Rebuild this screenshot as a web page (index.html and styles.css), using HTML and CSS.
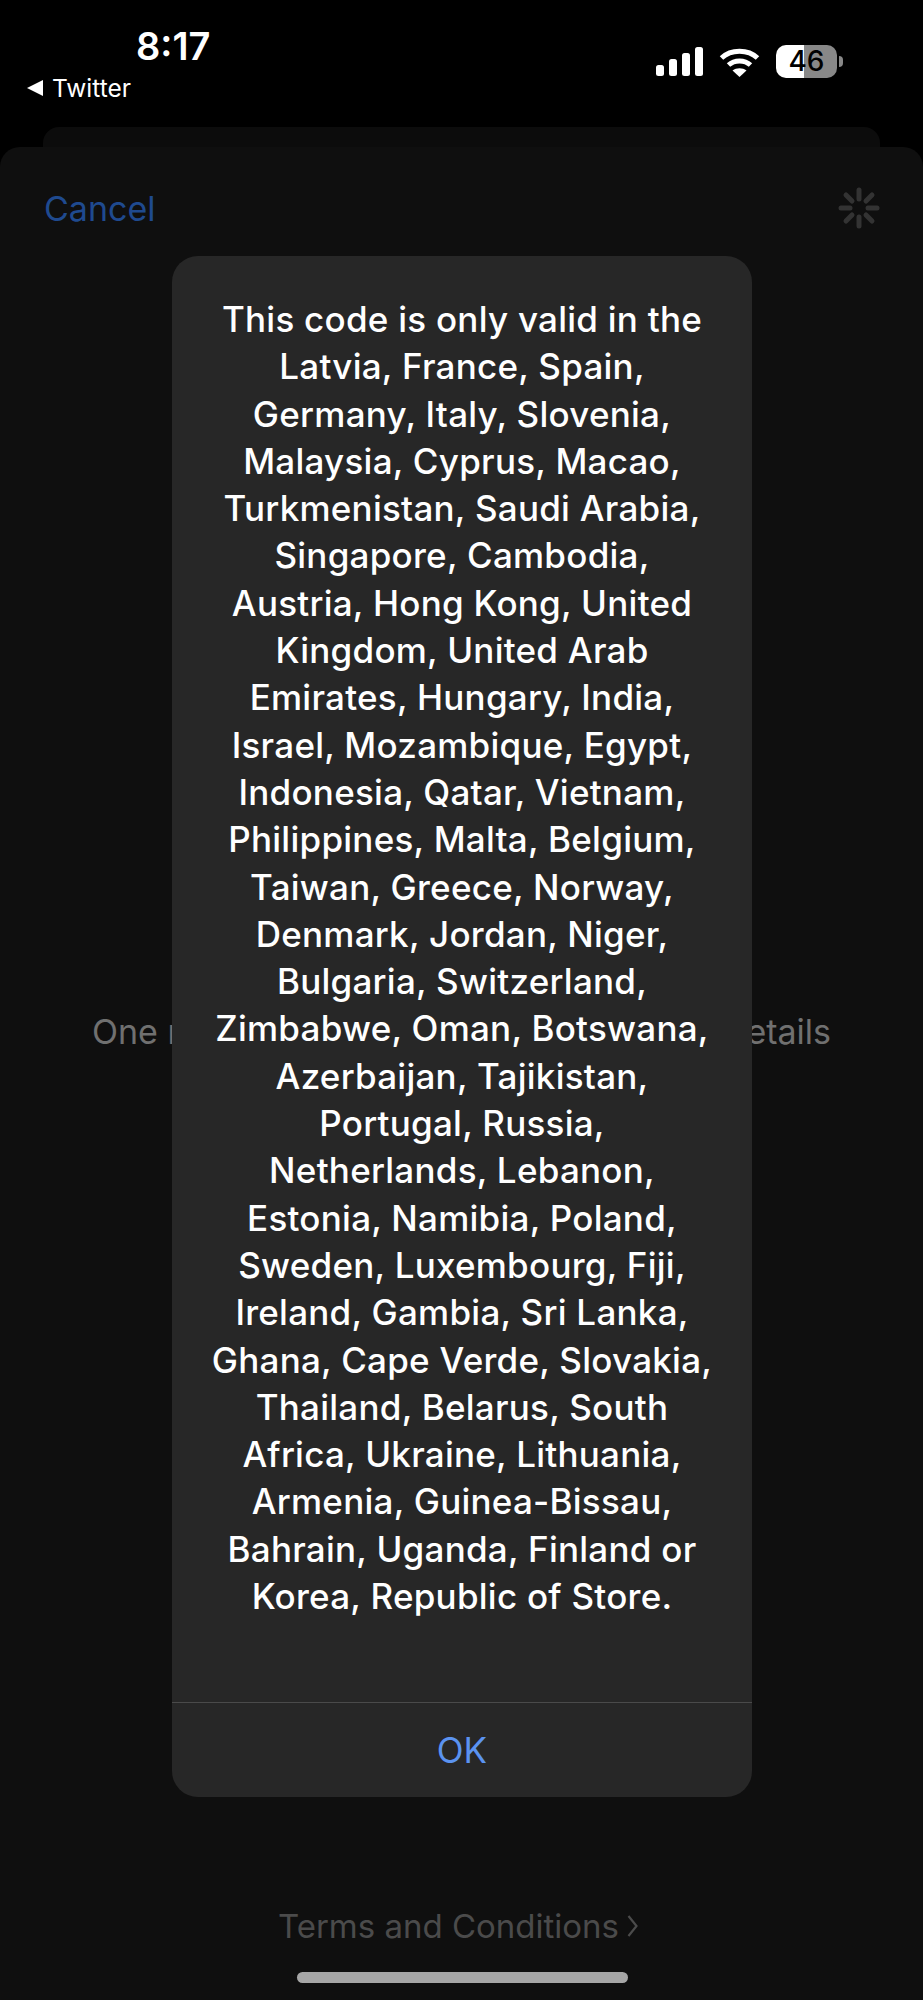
FILE: index.html
```html
<!DOCTYPE html>
<html lang="en">
<head>
  <meta charset="UTF-8">
  <meta name="viewport" content="width=device-width, initial-scale=1.0">
  <link rel="stylesheet" href="styles.css">
  <title>Redeem Code</title>
</head>
<body>
  <div class="status-bar">
    <div class="status-left">
      <div class="status-time">8:17</div>
      <div class="status-back">
        <svg class="back-arrow" width="16" height="16" viewBox="0 0 16 16"><path d="M0 8 L16 0 V16 Z" fill="#fff" /></svg>
        <span>Twitter</span>
      </div>
    </div>
    <div class="status-right">
      <svg width="47" height="29" viewBox="0 0 47 29" fill="#fff">
        <rect x="0" y="18" width="8" height="11" rx="2.5" />
        <rect x="13" y="12" width="8" height="17" rx="2.5" />
        <rect x="26" y="6" width="8" height="23" rx="2.5" />
        <rect x="39" y="0" width="8" height="29" rx="2.5" />
      </svg>
      <svg width="41" height="30" viewBox="0 0 41 30" fill="none" stroke="#fff" stroke-width="5">
        <path d="M2.5 11 C12 2 29 2 38.500 11" />
        <path d="M9.500 18 C15.500 12.500 25.500 12.500 31.500 18" />
        <path d="M20.500 30 L13.500 23.500 C17.500 20.500 23.500 20.500 27.500 23.500 Z" fill="#fff" stroke="none" />
      </svg>
      <div class="battery">
        <div class="battery-body">46</div>
        <div class="battery-nub"></div>
      </div>
    </div>
  </div>

  <div class="back-card"></div>

  <div class="sheet">
    <div class="sheet-header">
      <span class="cancel">Cancel</span>
      <svg class="spinner" width="42" height="42" viewBox="0 0 42 42" stroke="#333" stroke-width="5" stroke-linecap="round">
        <path d="M21 3 V12" />
        <path d="M21 30 V39" />
        <path d="M3 21 H12" />
        <path d="M30 21 H39" />
        <path d="M8 8 L14 14" />
        <path d="M28 28 L34 34" />
        <path d="M34 8 L28 14" />
        <path d="M14 28 L8 34" />
      </svg>
    </div>
    <div class="sheet-note">
      <span>One r</span>
      <span>etails</span>
    </div>
    <div class="sheet-footer">
      <div class="terms">
        <span>Terms and Conditions</span>
        <svg width="11" height="24" viewBox="0 0 11 24" fill="none" stroke="#4b4b4b" stroke-width="2.200"><path d="M1.500 2 L9.500 12 L1.500 22" /></svg>
      </div>
      <div class="home-indicator"></div>
    </div>
  </div>

  <div class="dialog">
    <p class="dialog-text">
      This code is only valid in the<br>
      Latvia, France, Spain,<br>
      Germany, Italy, Slovenia,<br>
      Malaysia, Cyprus, Macao,<br>
      Turkmenistan, Saudi Arabia,<br>
      Singapore, Cambodia,<br>
      Austria, Hong Kong, United<br>
      Kingdom, United Arab<br>
      Emirates, Hungary, India,<br>
      Israel, Mozambique, Egypt,<br>
      Indonesia, Qatar, Vietnam,<br>
      Philippines, Malta, Belgium,<br>
      Taiwan, Greece, Norway,<br>
      Denmark, Jordan, Niger,<br>
      Bulgaria, Switzerland,<br>
      Zimbabwe, Oman, Botswana,<br>
      Azerbaijan, Tajikistan,<br>
      Portugal, Russia,<br>
      Netherlands, Lebanon,<br>
      Estonia, Namibia, Poland,<br>
      Sweden, Luxembourg, Fiji,<br>
      Ireland, Gambia, Sri Lanka,<br>
      Ghana, Cape Verde, Slovakia,<br>
      Thailand, Belarus, South<br>
      Africa, Ukraine, Lithuania,<br>
      Armenia, Guinea-Bissau,<br>
      Bahrain, Uganda, Finland or<br>
      Korea, Republic of Store.
    </p>
    <div class="dialog-action">OK</div>
  </div>
</body>
</html>
```

FILE: styles.css
```css
:root {
  --bg-color: rgb(0, 0, 0);
  --sheet-color: rgb(15, 15, 15);
  --back-card-color: rgb(12, 12, 12);
  --dialog-color: rgb(39, 39, 39);
}

* {
  box-sizing: border-box;
}

body {
  background-color: var(--bg-color);
  color: white;
  display: flex;
  flex-direction: column;
  font-family: Inter, "Liberation Sans", sans-serif;
  height: 2000px;
  margin: 0px;
  overflow: hidden;
  position: relative;
}

.status-bar {
  align-items: flex-start;
  display: flex;
  height: 127px;
  justify-content: space-between;
  padding: 26px 80px 0px 27px;
}

.status-left {
  display: flex;
  flex-direction: column;
}

.status-time {
  font-size: 38px;
  font-weight: 600;
  line-height: 40px;
  margin-left: 109px;
}

.status-back {
  align-items: center;
  display: flex;
  font-size: 24.5px;
  gap: 9px;
  line-height: 30px;
  margin-top: 7px;
}

.status-right {
  align-items: center;
  display: flex;
  gap: 16px;
  margin-top: 19px;
}

.battery {
  align-items: center;
  display: flex;
  gap: 2px;
}

.battery-body {
  background: linear-gradient(to right, #fff 0, #fff 28px, #888 28px, #888 100%);
  border-radius: 10px;
  color: black;
  font-size: 28px;
  font-weight: 500;
  height: 33px;
  line-height: 33px;
  text-align: center;
  width: 61px;
}

.battery-nub {
  background-color: #888;
  border-radius: 0px 5px 5px 0px;
  height: 11px;
  width: 4px;
}

.back-card {
  background-color: var(--back-card-color);
  border-radius: 16px 16px 0px 0px;
  flex-shrink: 0;
  height: 20px;
  margin: 0px 43px;
}

.sheet {
  background-color: var(--sheet-color);
  border-radius: 20px 20px 0px 0px;
  display: flex;
  flex: 1;
  flex-direction: column;
}

.sheet-header {
  align-items: center;
  display: flex;
  height: 122px;
  justify-content: space-between;
  padding: 0px 44px;
}

.cancel {
  color: #1f4a8f;
  font-size: 34px;
}

.spinner {
  margin-right: -1px;
}

.sheet-note {
  color: #707070;
  display: flex;
  font-size: 34px;
  justify-content: space-between;
  line-height: 40px;
  margin-top: 743px;
  padding: 0px 92px;
}

.sheet-footer {
  align-items: center;
  display: flex;
  flex: 1;
  flex-direction: column;
  justify-content: flex-end;
  padding-bottom: 17px;
}

.terms {
  align-items: center;
  color: #4b4b4b;
  display: flex;
  font-size: 33px;
  gap: 8px;
  line-height: 40px;
  margin-right: 7px;
}

.home-indicator {
  background-color: #a6a6a6;
  border-radius: 6px;
  height: 11px;
  margin-left: 2px;
  margin-top: 26px;
  width: 331px;
}

.dialog {
  background-color: var(--dialog-color);
  border-radius: 26px;
  display: flex;
  flex-direction: column;
  height: 1541px;
  left: 172px;
  position: absolute;
  top: 256px;
  width: 580px;
}

.dialog-text {
  flex: 1;
  font-size: 35px;
  font-weight: 500;
  letter-spacing: 0.25px;
  line-height: 47.3px;
  margin: 0px;
  padding-top: 40px;
  text-align: center;
}

.dialog-action {
  border-top: 1px solid #4a4a4a;
  color: #5b93f0;
  font-size: 35px;
  height: 95px;
  line-height: 95px;
  text-align: center;
}
```
